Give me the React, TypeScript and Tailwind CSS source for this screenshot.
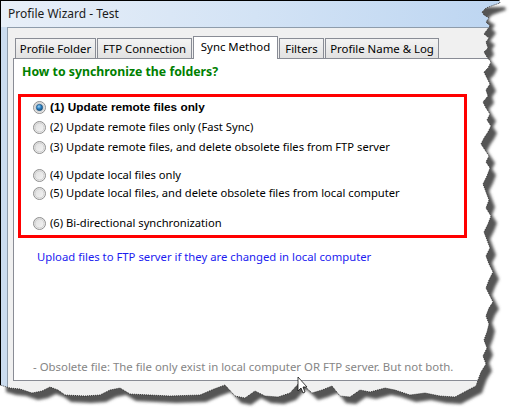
import React from "react";

const ragged =
  "M499 0 L500 3 L494 5 L486 8 L482 12 L484 15 L489 18 L486 22 L490 26 L487 30 L484 34 L489 38 L486 42 L488 48 L484 52 L487 57 L491 62 L488 68 L484 72 L487 78 L490 84 L486 90 L488 96 L483 102 L486 108 L490 114 L487 120 L491 126 L488 132 L484 138 L481 144 L485 150 L489 156 L486 162 L490 168 L487 176 L483 184 L486 192 L489 200 L486 208 L491 216 L488 224 L484 232 L487 240 L490 248 L486 256 L489 264 L493 272 L489 280 L486 288 L490 296 L493 302 L489 308 L486 316 L489 324 L487 332 L484 340 L487 348 L483 356 L486 364 L481 372 L478 380 L476 386 L470 389 L455 397 L440 396 L425 393 L410 395 L395 390 L385 388 L370 392 L360 390 L350 397 L340 396 L332 386 L322 390 L312 393 L300 382 L290 393 L278 397 L265 396 L255 391 L245 398 L235 396 L225 385 L214 389 L200 395 L170 396 L150 395 L130 394 L120 388 L110 390 L100 395 L85 396 L65 395 L58 390 L50 387 L42 391 L32 393 L20 389 L10 388 L0 385";
const torn = `M0 0 ${ragged.replace(/^M/, "L")} Z`;
const outside = `M0 0 H515 V416 H0 Z ${torn}`;

function Radio({ checked }: { checked?: boolean }) {
  return (
    <svg width="13" height="13" viewBox="0 0 13 13" className="shrink-0">
      <defs>
        <linearGradient id="rg" x1="0" y1="0" x2="1" y2="1">
          <stop offset="0" stopColor="#dcdcdc" />
          <stop offset="1" stopColor="#f7f7f7" />
        </linearGradient>
        <radialGradient id="dot" cx="0.4" cy="0.35" r="0.7">
          <stop offset="0" stopColor="#9ad3f5" />
          <stop offset="0.5" stopColor="#2a7fc4" />
          <stop offset="1" stopColor="#12486f" />
        </radialGradient>
      </defs>
      <circle cx="6.5" cy="6.5" r="6" fill="url(#rg)" stroke="#8f8f8f" />
      <circle cx="6.5" cy="6.5" r="4.5" fill="none" stroke="#d0d0d0" strokeWidth="1" />
      {checked && <circle cx="6.5" cy="6.5" r="3.2" fill="url(#dot)" stroke="#1d4f78" strokeWidth="0.6" />}
    </svg>
  );
}

const font = { fontFamily: '"Noto Sans", "Open Sans", sans-serif' };
const boldFont = { fontFamily: '"Liberation Sans", Arial, sans-serif' };

function Row({ label, bold, checked, cls }: { label: string; bold?: boolean; checked?: boolean; cls: string }) {
  return (
    <div className={`flex items-center gap-[4px] h-[18px] ${cls}`}>
      <Radio checked={checked} />
      <span
        className={`leading-[18px] text-black ${bold ? "font-bold text-[11.8px]" : "text-[11.2px]"}`}
        style={bold ? boldFont : undefined}
      >
        {label}
      </span>
    </div>
  );
}

export default function App() {
  const tabs = [
    { t: "Profile Folder", w: "w-[81px]" },
    { t: "FTP Connection", w: "w-[95px]" },
    { t: "Sync Method", w: "w-[85px]", sel: true },
    { t: "Filters", w: "w-[45px]" },
    { t: "Profile Name & Log", w: "w-[114px]" },
  ];
  return (
    <div className="relative w-[515px] h-[416px] bg-white overflow-hidden" style={font}>
      <div className="w-[510px] h-[405px] border-t border-l border-black bg-[#cbdcef] flex flex-col">
        <div className="h-[26px] flex items-center pl-[7px] bg-gradient-to-r from-[#e8eff8] via-[#d3e3f5] to-[#bcd5f1]">
          <span className="text-[12px] text-[#1b1b1b]">Profile Wizard - Test</span>
        </div>
        <div className="ml-[6px] flex-1 flex flex-col bg-[#f0f0f0] border-t border-l border-[#8e9cab] pl-[5px] pt-[8px]">
          <div className="flex items-end gap-[1px] pl-[2px] h-[22px]">
            {tabs.map((tab) =>
              tab.sel ? (
                <div
                  key={tab.t}
                  className={`${tab.w} h-[23px] -mb-[1px] relative z-10 bg-white border border-b-0 border-[#898c95] flex items-start justify-center pt-[1px] text-[11.4px] text-black`}
                >
                  {tab.t}
                </div>
              ) : (
                <div
                  key={tab.t}
                  className={`${tab.w} h-[20px] bg-gradient-to-b from-[#f3f3f3] to-[#e2e2e2] border border-b-0 border-[#898c95] flex items-center justify-center pt-[1px] text-[11.4px] text-black`}
                >
                  {tab.t}
                </div>
              )
            )}
          </div>
          <div className="h-[323px] bg-white border-t border-l border-b border-[#898c95] flex flex-col">
            <div className="mt-[5px] ml-[8px] text-[12.3px] leading-[16px] font-bold text-[#008000]">
              How to synchronize the folders?
            </div>
            <div className="mt-[14px] ml-[4px] w-[449px] h-[144px] border-[3px] border-[#ff0000] pl-[12px] flex flex-col">
              <Row label="(1) Update remote files only" bold checked cls="mt-[1px]" />
              <Row label="(2) Update remote files only (Fast Sync)" cls="mt-[2px]" />
              <Row label="(3) Update remote files, and delete obsolete files from FTP server" cls="mt-[2px]" />
              <Row label="(4) Update local files only" cls="mt-[10px]" />
              <Row label="(5) Update local files, and delete obsolete files from local computer" cls="mt-0" />
              <Row label="(6) Bi-directional synchronization" cls="mt-[12px]" />
            </div>
            <div className="mt-[11px] ml-[23px] text-[11.3px] leading-[16px] text-[#1c1cf0]">
              Upload files to FTP server if they are changed in local computer
            </div>
            <div className="mt-auto mb-[5px] ml-[19px] text-[11.4px] leading-[16px] text-[#858585]">
              - Obsolete file: The file only exist in local computer OR FTP server. But not both.
            </div>
          </div>
        </div>
      </div>
      <svg width="515" height="416" className="absolute inset-0">
        <defs>
          <filter id="blur" x="-10%" y="-10%" width="120%" height="120%">
            <feGaussianBlur stdDeviation="1.6" />
          </filter>
          <clipPath id="outside">
            <path d={outside} clipRule="evenodd" />
          </clipPath>
        </defs>
        <path d={outside} fill="#ffffff" fillRule="evenodd" />
        <g clipPath="url(#outside)">
          <path d={torn} fill="#555555" transform="translate(6,7)" filter="url(#blur)" />
        </g>
        <path d={ragged} fill="none" stroke="#1a1a1a" strokeWidth="0.8" strokeDasharray="1 1" />
        <path
          d="M298 377 L298 391 L301 388 L303 393 L305 392 L303 387 L307 387 Z"
          fill="#ffffff"
          stroke="#111"
          strokeWidth="0.8"
        />
      </svg>
    </div>
  );
}
